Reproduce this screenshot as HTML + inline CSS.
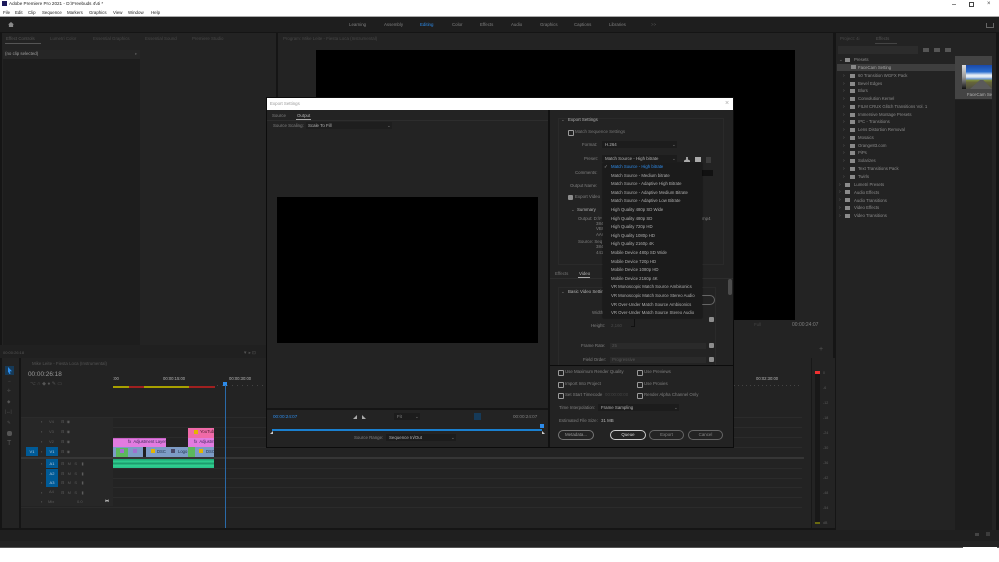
<!DOCTYPE html>
<html><head><meta charset="utf-8"><style>
html,body{margin:0;padding:0;background:#fff}
#p{position:relative;width:999px;height:562px;overflow:hidden;background:#151515;font-family:"Liberation Sans",sans-serif;font-size:4.4px;color:#8f8f8f}
#p div{position:absolute}
.t{position:absolute;white-space:nowrap;line-height:8px;height:8px}
.d{color:#555}.m{color:#808080}.l{color:#b4b4b4}
.k{color:#222;font-size:4.4px}
.n{position:absolute;white-space:nowrap;line-height:8px;height:8px;left:611px;color:#b0b0b0;font-size:4.3px}
.e{position:absolute;white-space:nowrap;line-height:8px;height:8px;color:#8c8c8c;font-size:4.3px;margin-top:.4px}
.cb{position:absolute;width:4px;height:4px;border:.8px solid #9a9a9a;border-radius:1px}
.btn{position:absolute;height:8px;border:.8px solid #777;border-radius:5px;line-height:8px;text-align:center;color:#999;font-size:4.4px}
.ln{position:absolute;background:#2b2b2b;height:1px}
.fo{position:absolute;width:5px;height:4px;background:#8a8a8a}
.arr{position:absolute;color:#666;font-size:5px;line-height:8px}
.ab{position:absolute;background:#005a96;width:12px;height:9px;color:#b5cbe0;line-height:9px;text-align:center;font-size:4px}
.tl{position:absolute;color:#5c5c5c;font-size:4px;line-height:8px;white-space:nowrap}
.ck{position:absolute;width:5px;height:5px;background:#8d8d8d;border-radius:1px}
</style></head><body><div id="p">

<!-- title/menu -->
<div style="left:0;top:0;width:999px;height:16px;background:#fff"></div>
<div style="left:0;top:16px;width:999px;height:1px;background:#aaa"></div>
<div style="left:2px;top:1px;width:5px;height:5px;background:#1d1a5c"></div>
<span class="t k" style="left:9px;top:0;font-size:4.6px">Adobe Premiere Pro 2021 - D:\Freebuds 4\4i *</span>
<span class="t k" style="left:3px;top:9px">File</span>
<span class="t k" style="left:15px;top:9px">Edit</span>
<span class="t k" style="left:28px;top:9px">Clip</span>
<span class="t k" style="left:42px;top:9px">Sequence</span>
<span class="t k" style="left:67px;top:9px">Markers</span>
<span class="t k" style="left:89px;top:9px">Graphics</span>
<span class="t k" style="left:113px;top:9px">View</span>
<span class="t k" style="left:128px;top:9px">Window</span>
<span class="t k" style="left:151px;top:9px">Help</span>
<div style="left:952px;top:4px;width:4px;height:1px;background:#888"></div>
<div style="left:969px;top:2px;width:3px;height:3px;border:1px solid #444"></div>
<span class="t" style="left:987px;top:0;color:#444;font-size:6px">×</span>

<!-- header -->
<div style="left:0;top:17px;width:999px;height:15px;background:#1e1e1e"></div>
<div style="left:8px;top:22px;width:6px;height:5px;background:#8a8a8a;clip-path:polygon(50% 0,100% 50%,85% 50%,85% 100%,15% 100%,15% 50%,0 50%)"></div>
<span class="t m" style="left:349px;top:21px">Learning</span>
<span class="t m" style="left:384px;top:21px">Assembly</span>
<span class="t" style="left:420px;top:21px;color:#2d8ceb">Editing</span>
<span class="t m" style="left:452px;top:21px">Color</span>
<span class="t m" style="left:480px;top:21px">Effects</span>
<span class="t m" style="left:511px;top:21px">Audio</span>
<span class="t m" style="left:540px;top:21px">Graphics</span>
<span class="t m" style="left:574px;top:21px">Captions</span>
<span class="t m" style="left:609px;top:21px">Libraries</span>
<span class="t d" style="left:651px;top:21px">&gt;&gt;</span>
<div style="left:986px;top:23px;width:6px;height:4px;border:.8px solid #666;border-top:0"></div>

<!-- left panel -->
<div style="left:2px;top:33px;width:274px;height:312px;background:#232323"></div>
<span class="t d" style="left:6px;top:35px">Effect Controls</span>
<div style="left:5px;top:43px;width:36px;height:1px;background:#555"></div>
<span class="t" style="left:50px;top:35px;color:#484848">Lumetri Color</span>
<span class="t" style="left:93px;top:35px;color:#484848">Essential Graphics</span>
<span class="t" style="left:145px;top:35px;color:#484848">Essential Sound</span>
<span class="t" style="left:192px;top:35px;color:#484848">Premiere Studio</span>
<div style="left:3px;top:50px;width:137px;height:295px;background:#1d1d1d"></div>
<div style="left:3px;top:50px;width:137px;height:9px;background:#262626"></div>
<span class="t" style="left:5px;top:50px;color:#a0a0a0">(no clip selected)</span>
<span class="t d" style="left:135px;top:50px">▸</span>
<div style="left:0;top:345px;width:276px;height:13px;background:#202020"></div>
<span class="t d" style="left:3px;top:349px;font-size:4px">00:00:26:18</span>
<span class="t d" style="left:243px;top:349px">▼ ▸ ⊡</span>

<!-- program -->
<div style="left:278px;top:33px;width:555px;height:325px;background:#232323"></div>
<span class="t" style="left:283px;top:35px;color:#484848">Program: Mike Leite - Fiesta Loca (Instrumental)</span>
<div style="left:316px;top:50px;width:479px;height:270px;background:#000"></div>
<span class="t" style="left:754px;top:321px;color:#444">Full</span>
<span class="t m" style="left:792px;top:321px;font-size:5px">00:00:24:07</span>
<span class="t d" style="left:819px;top:346px;font-size:7px">+</span>

<!-- effects panel -->
<div style="left:836px;top:33px;width:160px;height:497px;background:#232323"></div>
<div style="left:955px;top:100px;width:37px;height:430px;background:#1d1d1d"></div>
<span class="t" style="left:840px;top:35px;color:#4a4a4a">Project: 4i</span>
<span class="t d" style="left:876px;top:35px">Effects</span>
<div style="left:875px;top:43px;width:22px;height:1px;background:#444"></div>
<div style="left:838px;top:46px;width:80px;height:8px;background:#2c2c2c"></div>
<div style="left:923px;top:48px;width:6px;height:4px;background:#555"></div>
<div style="left:934px;top:48px;width:6px;height:4px;background:#555"></div>
<div style="left:945px;top:48px;width:6px;height:4px;background:#555"></div>
<div style="left:837px;top:64px;width:118px;height:7px;background:#3e3e3e"></div>
<div style="left:955px;top:56px;width:37px;height:43px;background:#444"></div>
<div style="left:962px;top:65px;width:30px;height:24px;background:linear-gradient(180deg,#1a48a8 0,#2a6ecf 28%,#e8eef5 42%,#dfe8f2 50%,#6f9ad0 58%,#7d8a3a 64%,#66663a 72%,#4c4b42 100%)"></div>
<div style="left:970px;top:80px;width:22px;height:9px;background:#5a5a5a;clip-path:polygon(45% 0,60% 0,100% 100%,0 100%)"></div>
<div style="left:962px;top:65px;width:4px;height:24px;background:linear-gradient(180deg,#ddd,#999 50%,#111)"></div>
<span class="t l" style="left:967px;top:91px;font-size:4.3px;width:25px;overflow:hidden">FaceCam Set</span>

<span class="t m" style="left:839px;top:56px">⌄</span>
<div class="fo" style="left:845px;top:58px"></div><span class="e" style="left:854px;top:56px">Presets</span>
<div class="fo" style="left:851px;top:65px;background:#888"></div><span class="e" style="left:858px;top:63.5px;color:#a8a8a8">FaceCam Setting</span>
<div class="fo" style="left:850px;top:74px"></div><span class="e" style="left:858px;top:72px">60 Transition WGFX Pack</span><span class="arr" style="left:843px;top:72px">›</span>
<div class="fo" style="left:850px;top:82px"></div><span class="e" style="left:858px;top:80px">Bevel Edges</span><span class="arr" style="left:843px;top:80px">›</span>
<div class="fo" style="left:850px;top:89px"></div><span class="e" style="left:858px;top:87px">Blurs</span><span class="arr" style="left:843px;top:87px">›</span>
<div class="fo" style="left:850px;top:97px"></div><span class="e" style="left:858px;top:95px">Convolution Kernel</span><span class="arr" style="left:843px;top:95px">›</span>
<div class="fo" style="left:850px;top:105px"></div><span class="e" style="left:858px;top:103px">FILM CRUX Glitch Transitions Vol. 1</span><span class="arr" style="left:843px;top:103px">›</span>
<div class="fo" style="left:850px;top:113px"></div><span class="e" style="left:858px;top:111px">Immersive Montage Presets</span><span class="arr" style="left:843px;top:111px">›</span>
<div class="fo" style="left:850px;top:120px"></div><span class="e" style="left:858px;top:118px">IPC - Transitions</span><span class="arr" style="left:843px;top:118px">›</span>
<div class="fo" style="left:850px;top:128px"></div><span class="e" style="left:858px;top:126px">Lens Distortion Removal</span><span class="arr" style="left:843px;top:126px">›</span>
<div class="fo" style="left:850px;top:136px"></div><span class="e" style="left:858px;top:134px">Mosaics</span><span class="arr" style="left:843px;top:134px">›</span>
<div class="fo" style="left:850px;top:144px"></div><span class="e" style="left:858px;top:142px">Orange83.com</span><span class="arr" style="left:843px;top:142px">›</span>
<div class="fo" style="left:850px;top:151px"></div><span class="e" style="left:858px;top:149px">PiPs</span><span class="arr" style="left:843px;top:149px">›</span>
<div class="fo" style="left:850px;top:159px"></div><span class="e" style="left:858px;top:157px">Solarizes</span><span class="arr" style="left:843px;top:157px">›</span>
<div class="fo" style="left:850px;top:167px"></div><span class="e" style="left:858px;top:165px">Text Transitions Pack</span><span class="arr" style="left:843px;top:165px">›</span>
<div class="fo" style="left:850px;top:175px"></div><span class="e" style="left:858px;top:173px">Twirls</span><span class="arr" style="left:843px;top:173px">›</span>
<div class="fo" style="left:845px;top:183px"></div><span class="e" style="left:854px;top:181px">Lumetri Presets</span><span class="arr" style="left:839px;top:181px">›</span>
<div class="fo" style="left:845px;top:190px"></div><span class="e" style="left:854px;top:188.5px">Audio Effects</span><span class="arr" style="left:839px;top:188px">›</span>
<div class="fo" style="left:845px;top:198px"></div><span class="e" style="left:854px;top:196.5px">Audio Transitions</span><span class="arr" style="left:839px;top:196px">›</span>
<div class="fo" style="left:845px;top:206px"></div><span class="e" style="left:854px;top:204px">Video Effects</span><span class="arr" style="left:839px;top:204px">›</span>
<div class="fo" style="left:845px;top:214px"></div><span class="e" style="left:854px;top:212px">Video Transitions</span><span class="arr" style="left:839px;top:212px">›</span>

<!-- tools -->
<div style="left:2px;top:358px;width:17px;height:170px;background:#232323"></div>
<div style="left:5px;top:366px;width:9px;height:9px;background:#163a58"></div>
<div style="left:8px;top:367px;width:4px;height:7px;background:#2d8ceb;clip-path:polygon(0 0,100% 60%,50% 60%,60% 100%,30% 100%,25% 70%,0 85%)"></div>
<span class="t d" style="left:7px;top:377px">→</span>
<span class="t d" style="left:7px;top:387px">✛</span>
<span class="t d" style="left:7px;top:398px">◆</span>
<span class="t d" style="left:5px;top:408px">|↔|</span>
<span class="t d" style="left:7px;top:419px">✎</span>
<div style="left:7px;top:431px;width:5px;height:5px;background:#555;border-radius:2px"></div>
<span class="t d" style="left:7px;top:440px;font-size:7px">T</span>

<!-- timeline -->
<div style="left:21px;top:358px;width:791px;height:170px;background:#232323"></div>
<div style="left:811px;top:358px;width:24px;height:170px;background:#232323"></div>
<div style="left:811px;top:358px;width:1px;height:170px;background:#181818"></div>
<span class="t d" style="left:32px;top:360px">Mike Leite - Fiesta Loca (Instrumental)</span>
<span class="t" style="left:28px;top:371px;font-size:6.4px;color:#999">00:00:26:18</span>
<span class="t d" style="left:30px;top:380px;font-size:5px">⌥ ∩ ◆ ● ✎ ▭</span>
<span class="t l" style="left:113px;top:375px;font-size:4.2px">:00</span>
<span class="t l" style="left:163px;top:375px;font-size:4.2px">00:00:15:00</span>
<span class="t l" style="left:229px;top:375px;font-size:4.2px">00:00:30:00</span>
<span class="t l" style="left:756px;top:375px;font-size:4.2px">00:02:30:00</span>
<div style="left:113px;top:386px;width:16px;height:2px;background:#a8a000"></div>
<div style="left:129px;top:386px;width:15px;height:2px;background:#a02020"></div>
<div style="left:144px;top:386px;width:45px;height:2px;background:#a8a000"></div>
<div style="left:189px;top:386px;width:26px;height:2px;background:#a02020"></div>
<div style="left:217px;top:385px;width:70px;height:1px;background:repeating-linear-gradient(90deg,#444 0 1px,transparent 1px 5px)"></div>
<div style="left:734px;top:385px;width:68px;height:1px;background:repeating-linear-gradient(90deg,#444 0 1px,transparent 1px 4px)"></div>
<div style="left:223px;top:382px;width:4px;height:4px;background:#2d8ceb"></div>

<div class="ln" style="left:21px;top:417px;width:781px"></div>
<div class="ln" style="left:21px;top:427px;width:781px"></div>
<div class="ln" style="left:21px;top:437px;width:781px"></div>
<div class="ln" style="left:21px;top:447px;width:781px"></div>
<div style="left:21px;top:457px;width:783px;height:2px;background:#363636"></div>
<div class="ln" style="left:21px;top:468px;width:781px"></div>
<div class="ln" style="left:21px;top:478px;width:781px"></div>
<div class="ln" style="left:21px;top:487px;width:781px"></div>
<div class="ln" style="left:21px;top:497px;width:781px"></div>
<div class="ln" style="left:21px;top:507px;width:781px"></div>

<div style="left:21px;top:418px;width:92px;height:39px;background:#272727"></div>
<div style="left:21px;top:459px;width:92px;height:47px;background:#272727"></div>
<div class="ab" style="left:26px;top:447px">V1</div>
<div class="ab" style="left:46px;top:447px">V1</div>
<div class="ab" style="left:46px;top:459px">A1</div>
<div class="ab" style="left:46px;top:469px">A2</div>
<div class="ab" style="left:46px;top:478px">A3</div>
<span class="tl" style="left:49px;top:418px">V4</span>
<span class="tl" style="left:49px;top:428px">V3</span>
<span class="tl" style="left:49px;top:438px">V2</span>
<span class="tl" style="left:49px;top:488px">A4</span>
<span class="tl" style="left:48px;top:498px">Mix</span>
<span class="tl" style="left:77px;top:498px">0.0</span>
<span class="tl" style="left:105px;top:497px;color:#ccc">⧓</span>
<span class="tl" style="left:61px;top:418px">⊟&nbsp; ◉</span>
<span class="tl" style="left:61px;top:428px">⊟&nbsp; ◉</span>
<span class="tl" style="left:61px;top:438px">⊟&nbsp; ◉</span>
<span class="tl" style="left:61px;top:448px">⊟&nbsp; ◉</span>
<span class="tl" style="left:61px;top:460px">⊟&nbsp;&nbsp; M&nbsp;&nbsp; S&nbsp;&nbsp;&nbsp; ▮</span>
<span class="tl" style="left:61px;top:470px">⊟&nbsp;&nbsp; M&nbsp;&nbsp; S&nbsp;&nbsp;&nbsp; ▮</span>
<span class="tl" style="left:61px;top:479px">⊟&nbsp;&nbsp; M&nbsp;&nbsp; S&nbsp;&nbsp;&nbsp; ▮</span>
<span class="tl" style="left:61px;top:489px">⊟&nbsp;&nbsp; M&nbsp;&nbsp; S&nbsp;&nbsp;&nbsp; ▮</span>
<span class="tl" style="left:41px;top:418px">▪</span><span class="tl" style="left:41px;top:428px">▪</span><span class="tl" style="left:41px;top:438px">▪</span><span class="tl" style="left:41px;top:448px">▪</span><span class="tl" style="left:41px;top:460px">▪</span><span class="tl" style="left:41px;top:470px">▪</span><span class="tl" style="left:41px;top:479px">▪</span><span class="tl" style="left:41px;top:489px">▪</span><span class="tl" style="left:41px;top:498px">▪</span>

<!-- clips -->
<div style="left:113px;top:438px;width:53px;height:9px;background:#e27be0;border-top:1px solid #c860c6;box-sizing:border-box"></div>
<span class="tl" style="left:128px;top:438px;color:#3b2b5a;font-size:4.2px">fx&nbsp; Adjustment Layer</span>
<div style="left:188px;top:428px;width:26px;height:10px;background:#f06aa8"></div>
<div style="left:194px;top:430px;width:4px;height:4px;background:#e4b500"></div>
<span class="tl" style="left:200px;top:428px;color:#4a2030;font-size:4.2px;width:14px;overflow:hidden">YouTube</span>
<div style="left:188px;top:438px;width:26px;height:9px;background:#e27be0"></div>
<span class="tl" style="left:194px;top:438px;color:#3b2b5a;font-size:4.2px;width:20px;overflow:hidden">fx&nbsp; Adjustm</span>
<div style="left:113px;top:447px;width:30px;height:10px;background:#7d9cc6"></div>
<div style="left:116px;top:448px;width:12px;height:9px;background:#5cb85c"></div>
<div style="left:120px;top:449px;width:4px;height:4px;background:#a070d0"></div>
<div style="left:133px;top:449px;width:4px;height:4px;background:#a070d0"></div>
<div style="left:143px;top:447px;width:3px;height:10px;background:#202020"></div>
<div style="left:146px;top:447px;width:21px;height:10px;background:#7d9cc6"></div>
<div style="left:151px;top:449px;width:4px;height:4px;background:#e4b500"></div>
<span class="tl" style="left:157px;top:448px;color:#22304a;font-size:4.2px">DSC</span>
<div style="left:167px;top:447px;width:21px;height:10px;background:#7d9cc6"></div>
<div style="left:171px;top:449px;width:4px;height:4px;background:#4a4a6a"></div>
<span class="tl" style="left:178px;top:448px;color:#22304a;font-size:4.2px">Logo</span>
<div style="left:188px;top:447px;width:7px;height:10px;background:#5cb85c"></div>
<div style="left:195px;top:447px;width:19px;height:10px;background:#7d9cc6"></div>
<div style="left:199px;top:449px;width:4px;height:4px;background:#e4b500"></div>
<span class="tl" style="left:206px;top:448px;color:#22304a;font-size:4.2px">DSC</span>
<div style="left:113px;top:459px;width:101px;height:9px;background:linear-gradient(180deg,#1d9f70 0,#30d090 30%,#1a9468 50%,#30d090 70%,#27c088 100%)"></div>
<div style="left:225px;top:385px;width:1px;height:143px;background:#2a6aa8"></div>

<!-- meter -->
<div style="left:815px;top:371px;width:5px;height:3px;background:#ee3030"></div>
<div style="left:815px;top:374px;width:5px;height:150px;background:#181818"></div>
<div style="left:815px;top:522px;width:5px;height:2px;background:#6a6a10"></div>
<span class="tl" style="left:823px;top:369px;font-size:3.6px">0</span>
<span class="tl" style="left:823px;top:384px;font-size:3.6px">-6</span>
<span class="tl" style="left:823px;top:399px;font-size:3.6px">-12</span>
<span class="tl" style="left:823px;top:414px;font-size:3.6px">-18</span>
<span class="tl" style="left:823px;top:429px;font-size:3.6px">-24</span>
<span class="tl" style="left:823px;top:444px;font-size:3.6px">-30</span>
<span class="tl" style="left:823px;top:459px;font-size:3.6px">-36</span>
<span class="tl" style="left:823px;top:474px;font-size:3.6px">-42</span>
<span class="tl" style="left:823px;top:489px;font-size:3.6px">-48</span>
<span class="tl" style="left:823px;top:504px;font-size:3.6px">-54</span>
<span class="tl" style="left:823px;top:519px;font-size:3.6px">dB</span>

<!-- bottom -->
<div style="left:0;top:530px;width:999px;height:11px;background:#1f1f1f"></div>
<div style="left:975px;top:533px;width:4px;height:3px;background:#444"></div>
<div style="left:986px;top:532px;width:4px;height:4px;background:#3c3c3c"></div>
<div style="left:0;top:541px;width:999px;height:7px;background:#232323"></div>
<div style="left:0;top:547px;width:999px;height:1px;background:#555"></div>
<div style="left:0;top:548px;width:999px;height:14px;background:#fff"></div>
<div style="left:963px;top:547px;width:34px;height:2px;background:#fff"></div>

<!-- dialog -->
<div style="left:266px;top:97px;width:468px;height:351px;background:#0c0c0c"></div>
<div style="left:267px;top:110px;width:466px;height:337px;background:#232323"></div>
<div style="left:267px;top:98px;width:466px;height:12px;background:#fff"></div>
<span class="t" style="left:270px;top:100px;color:#9a9a9a">Export Settings</span>
<span class="t" style="left:725px;top:100px;color:#aaa;font-size:7px">×</span>
<span class="t m" style="left:272px;top:112px">Source</span>
<span class="t l" style="left:297px;top:112px">Output</span>
<div style="left:296px;top:119px;width:15px;height:1px;background:#aaa"></div>
<div style="left:267px;top:120px;width:281px;height:1px;background:#2d2d2d"></div>
<span class="t m" style="left:273px;top:122px">Source Scaling:</span>
<div style="left:306px;top:122px;width:86px;height:7px;background:#1e1e1e"></div>
<span class="t l" style="left:308px;top:122px">Scale To Fill</span>
<span class="t m" style="left:387px;top:122px">⌄</span>
<div style="left:277px;top:197px;width:261px;height:146px;background:#000"></div>
<div style="left:267px;top:408px;width:281px;height:2px;background:#151515"></div>
<div style="left:548px;top:110px;width:2px;height:337px;background:#111"></div>
<span class="t" style="left:273px;top:413px;color:#2d8ceb;font-size:4.6px">00:00:24:07</span>
<div style="left:353px;top:415px;width:4px;height:4px;background:#aaa;clip-path:polygon(100% 0,100% 100%,0 100%)"></div>
<div style="left:362px;top:415px;width:4px;height:4px;background:#aaa;clip-path:polygon(0 0,100% 100%,0 100%)"></div>
<div style="left:394px;top:413px;width:26px;height:7px;background:#1c1c1c"></div>
<span class="t m" style="left:397px;top:413px">Fit</span>
<span class="t m" style="left:415px;top:413px">⌄</span>
<div style="left:474px;top:413px;width:7px;height:7px;background:#163a58"></div>
<span class="t m" style="left:513px;top:413px;font-size:4.6px">00:00:24:07</span>
<div style="left:272px;top:429px;width:270px;height:2px;background:#1a80d0"></div>
<div style="left:540px;top:424px;width:4px;height:4px;background:#2d8ceb"></div>
<div style="left:270px;top:431px;width:3px;height:3px;background:#ccc;clip-path:polygon(100% 0,100% 100%,0 100%)"></div>
<div style="left:542px;top:431px;width:3px;height:3px;background:#ccc;clip-path:polygon(0 0,100% 100%,0 100%)"></div>
<span class="t m" style="left:354px;top:434px">Source Range:</span>
<div style="left:386px;top:434px;width:70px;height:7px;background:#1c1c1c"></div>
<span class="t l" style="left:389px;top:434px">Sequence In/Out</span>
<span class="t m" style="left:451px;top:434px">⌄</span>

<!-- right column -->
<div style="left:558px;top:118px;width:166px;height:147px;border:1px solid #2a2a2a;box-sizing:border-box"></div>
<span class="t m" style="left:561px;top:116px">⌄</span>
<span class="t l" style="left:568px;top:116px">Export Settings</span>
<div class="cb" style="left:568px;top:130px"></div>
<span class="t" style="left:575px;top:128px;color:#777">Match Sequence Settings</span>
<span class="t m" style="left:582px;top:141px">Format:</span>
<div style="left:602px;top:141px;width:75px;height:7px;background:#1c1c1c"></div>
<span class="t l" style="left:605px;top:141px">H.264</span>
<span class="t m" style="left:672px;top:141px">⌄</span>
<span class="t m" style="left:584px;top:155px">Preset:</span>
<div style="left:602px;top:155px;width:75px;height:7px;background:#1c1c1c"></div>
<span class="t l" style="left:605px;top:155px">Match Source - High bitrate</span>
<span class="t m" style="left:672px;top:155px">⌄</span>
<div style="left:684px;top:157px;width:6px;height:5px;background:#aaa;clip-path:polygon(35% 0,65% 0,65% 50%,100% 70%,100% 100%,0 100%,0 70%,35% 50%)"></div>
<div style="left:695px;top:157px;width:6px;height:5px;background:#aaa"></div>
<div style="left:706px;top:157px;width:5px;height:6px;background:#3c3c3c"></div>
<span class="t m" style="left:575px;top:169px">Comments:</span>
<div style="left:700px;top:170px;width:13px;height:6px;background:#111"></div>
<span class="t m" style="left:570px;top:182px">Output Name:</span>
<div class="ck" style="left:568px;top:195px"></div>
<span class="t m" style="left:575px;top:193px">Export Video</span>
<span class="t m" style="left:571px;top:206px">⌄</span>
<span class="t l" style="left:577px;top:206px">Summary</span>
<span class="t m" style="left:578px;top:215px">Output: D:\F</span>
<span class="t m" style="left:596px;top:220px">384</span>
<span class="t m" style="left:596px;top:225px">VBR</span>
<span class="t m" style="left:596px;top:231px">AAC</span>
<span class="t m" style="left:578px;top:238px">Source: Seq</span>
<span class="t m" style="left:596px;top:243px">384</span>
<span class="t m" style="left:596px;top:249px">441</span>
<span class="t m" style="left:702px;top:215px">mp4</span>
<span class="t" style="left:555px;top:270px;color:#777">Effects</span>
<span class="t l" style="left:579px;top:270px">Video</span>
<div style="left:578px;top:277px;width:12px;height:1px;background:#aaa"></div>
<div style="left:550px;top:278px;width:183px;height:1px;background:#2d2d2d"></div>
<div style="left:558px;top:287px;width:158px;height:78px;border:1px solid #2a2a2a;border-bottom:0;box-sizing:border-box"></div>
<span class="t m" style="left:561px;top:288px">⌄</span>
<span class="t l" style="left:568px;top:288px">Basic Video Settings</span>
<div class="btn" style="left:680px;top:295px;width:33px;border-color:#666"></div>
<span class="t m" style="left:592px;top:309px">Width:</span>
<span class="t m" style="left:591px;top:322px">Height:</span>
<span class="t" style="left:611px;top:322px;color:#4a4a4a">2,160</span>
<div class="ck" style="left:709px;top:317px"></div>
<span class="t m" style="left:581px;top:342px">Frame Rate:</span>
<div style="left:610px;top:343px;width:96px;height:6px;background:#2a2a2a"></div>
<span class="t d" style="left:612px;top:342px">25</span>
<div class="ck" style="left:709px;top:343px"></div>
<span class="t m" style="left:583px;top:356px">Field Order:</span>
<div style="left:610px;top:357px;width:96px;height:6px;background:#2a2a2a"></div>
<span class="t d" style="left:612px;top:356px">Progressive</span>
<div class="ck" style="left:709px;top:357px"></div>
<div style="left:728px;top:279px;width:4px;height:16px;background:#4c4c4c;border-radius:2px"></div>

<!-- dropdown -->
<div style="left:603px;top:163px;width:99px;height:155px;background:#1b1b1b;box-shadow:0 0 1px #000"></div>
<span class="t" style="left:604px;top:163px;color:#aaa">✓</span>
<span class="n" style="top:163px;color:#2d8ceb">Match Source - High bitrate</span>
<span class="n" style="top:171.6px">Match Source - Medium bitrate</span>
<span class="n" style="top:180.2px">Match Source - Adaptive High Bitrate</span>
<span class="n" style="top:188.8px">Match Source - Adaptive Medium Bitrate</span>
<span class="n" style="top:197.4px">Match Source - Adaptive Low Bitrate</span>
<span class="n" style="top:206px">High Quality 480p SD Wide</span>
<span class="n" style="top:214.6px">High Quality 480p SD</span>
<span class="n" style="top:223.2px">High Quality 720p HD</span>
<span class="n" style="top:231.8px">High Quality 1080p HD</span>
<span class="n" style="top:240.4px">High Quality 2160p 4K</span>
<span class="n" style="top:249px">Mobile Device 480p SD Wide</span>
<span class="n" style="top:257.6px">Mobile Device 720p HD</span>
<span class="n" style="top:266.2px">Mobile Device 1080p HD</span>
<span class="n" style="top:274.8px">Mobile Device 2160p 4K</span>
<span class="n" style="top:283.4px">VR Monoscopic Match Source Ambisonics</span>
<span class="n" style="top:292px">VR Monoscopic Match Source Stereo Audio</span>
<span class="n" style="top:300.6px">VR Over-Under Match Source Ambisonics</span>
<span class="n" style="top:309.2px">VR Over-Under Match Source Stereo Audio</span>
<div style="left:631px;top:326px;width:3px;height:1px;background:#111"></div>
<div style="left:634px;top:319px;width:1px;height:8px;background:#111"></div>

<!-- bottom controls -->
<div style="left:550px;top:365px;width:183px;height:1px;background:#0c0c0c"></div>
<div class="cb" style="left:558px;top:370px"></div><span class="t m" style="left:565px;top:368px">Use Maximum Render Quality</span>
<div class="cb" style="left:637px;top:370px"></div><span class="t m" style="left:644px;top:368px">Use Previews</span>
<div class="cb" style="left:558px;top:382px"></div><span class="t m" style="left:565px;top:380px">Import Into Project</span>
<div class="cb" style="left:637px;top:382px"></div><span class="t m" style="left:644px;top:380px">Use Proxies</span>
<div class="cb" style="left:558px;top:393px"></div><span class="t m" style="left:565px;top:391px">Set Start Timecode</span>
<span class="t" style="left:605px;top:391px;color:#444">00:00:00:00</span>
<div class="cb" style="left:637px;top:393px"></div><span class="t m" style="left:644px;top:391px">Render Alpha Channel Only</span>
<span class="t m" style="left:559px;top:404px">Time Interpolation:</span>
<div style="left:598px;top:404px;width:81px;height:7px;background:#1c1c1c"></div>
<span class="t l" style="left:601px;top:404px">Frame Sampling</span>
<span class="t m" style="left:674px;top:404px">⌄</span>
<span class="t m" style="left:559px;top:417px">Estimated File Size:</span>
<span class="t l" style="left:601px;top:417px">31 MB</span>
<div class="btn" style="left:558px;top:430px;width:34px">Metadata...</div>
<div class="btn" style="left:610px;top:430px;width:34px;border-color:#ccc;color:#ddd">Queue</div>
<div class="btn" style="left:649px;top:430px;width:33px;border-color:#666;color:#888">Export</div>
<div class="btn" style="left:688px;top:430px;width:33px;border-color:#666;color:#888">Cancel</div>

</div></body></html>
